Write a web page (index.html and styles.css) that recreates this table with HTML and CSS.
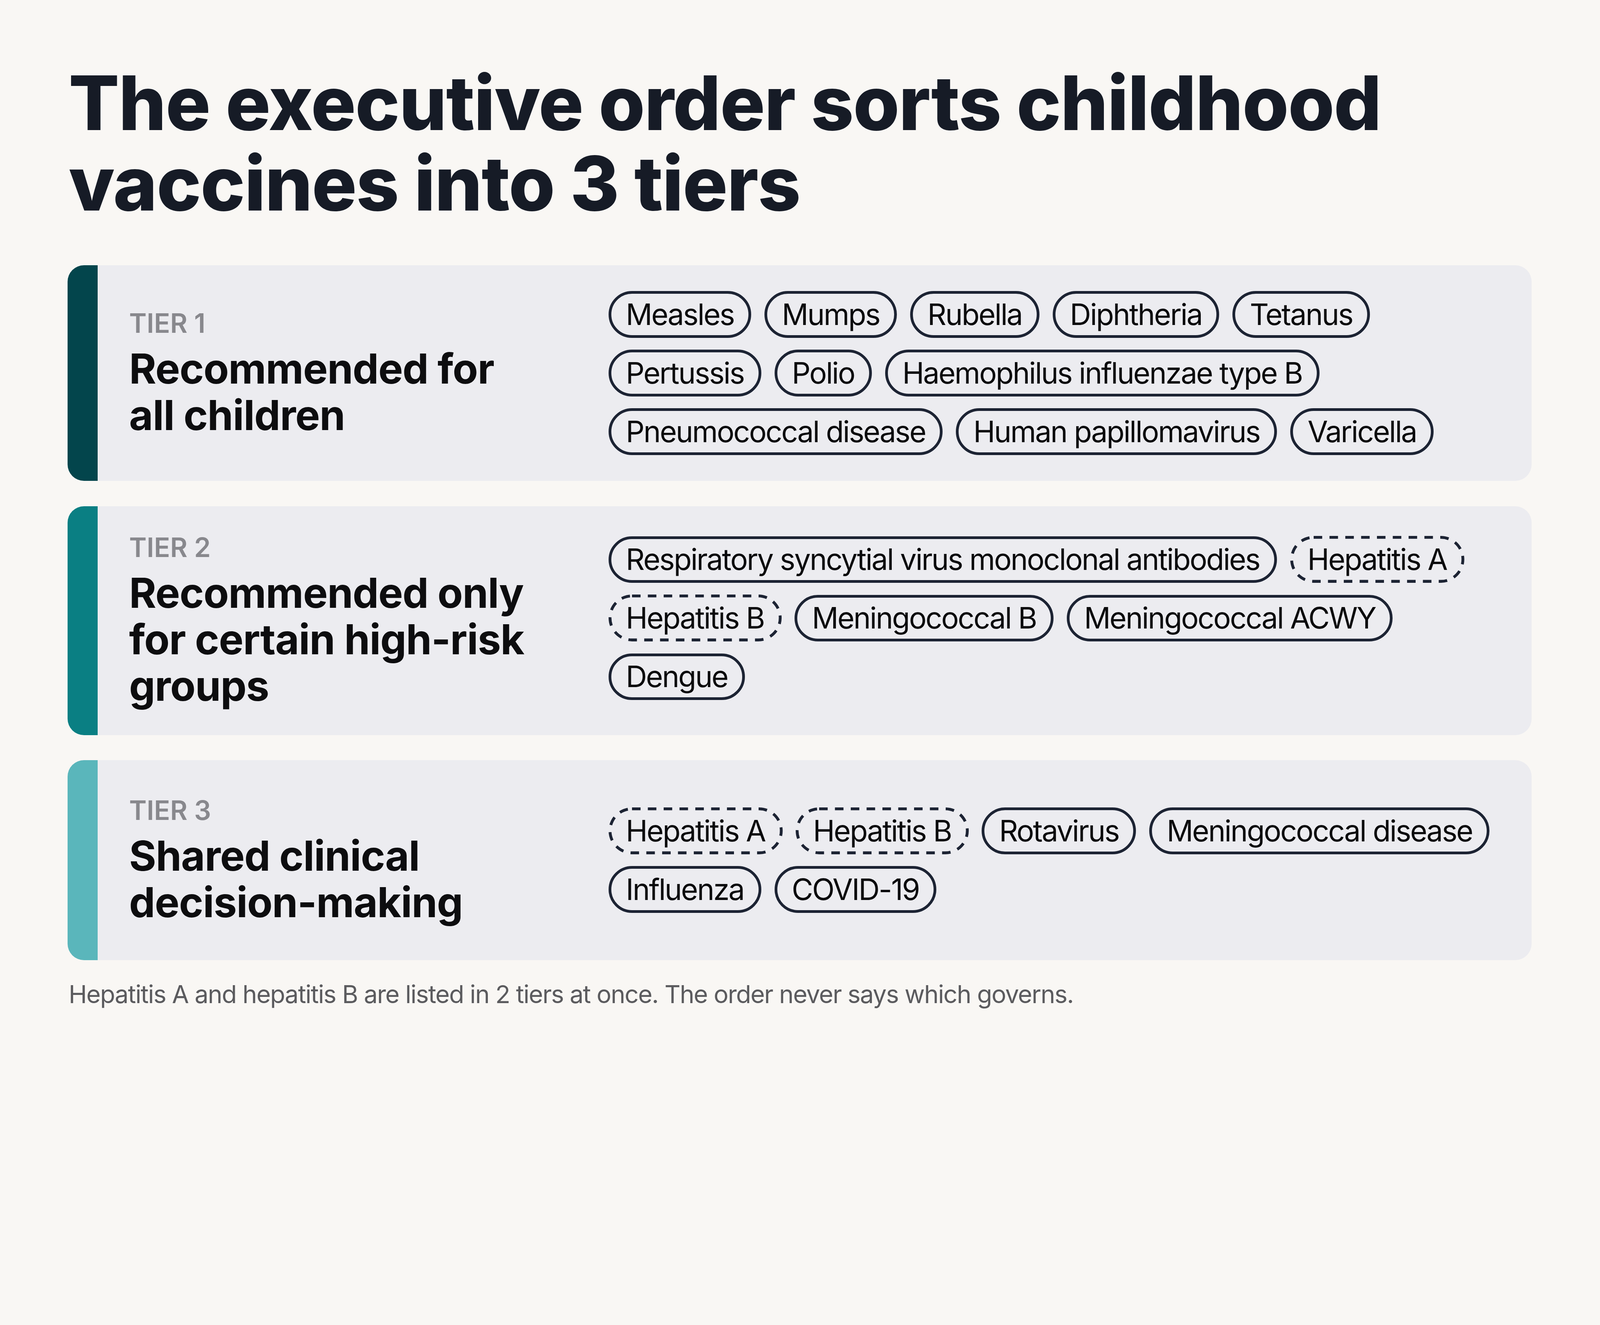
FILE: index.html
```html
<!DOCTYPE html>
<html lang="en">
<head>
<meta charset="utf-8">
<title>Childhood vaccine tiers</title>
<link rel="stylesheet" href="styles.css">
</head>
<body>
<main class="page">
  <h1 class="title">The executive order sorts childhood<br>vaccines into 3 tiers</h1>
  <section class="tiers">
    <article class="card">
      <div class="bar bar-1"></div>
      <div class="card-body">
        <div class="label">
          <div class="tier">TIER 1</div>
          <h2 class="heading">Recommended for<br>all children</h2>
        </div>
        <ul class="pills">
          <li class="pill">Measles</li>
          <li class="pill">Mumps</li>
          <li class="pill">Rubella</li>
          <li class="pill">Diphtheria</li>
          <li class="pill">Tetanus</li>
          <li class="pill">Pertussis</li>
          <li class="pill">Polio</li>
          <li class="pill">Haemophilus influenzae type B</li>
          <li class="pill">Pneumococcal disease</li>
          <li class="pill">Human papillomavirus</li>
          <li class="pill">Varicella</li>
        </ul>
      </div>
    </article>
    <article class="card">
      <div class="bar bar-2"></div>
      <div class="card-body">
        <div class="label">
          <div class="tier">TIER 2</div>
          <h2 class="heading">Recommended only<br>for certain high-risk<br>groups</h2>
        </div>
        <ul class="pills pills-shift">
          <li class="pill">Respiratory syncytial virus monoclonal antibodies</li>
          <li class="pill dashed">Hepatitis A<svg class="dash" aria-hidden="true"><rect class="dash-line"/></svg></li>
          <li class="pill dashed">Hepatitis B<svg class="dash" aria-hidden="true"><rect class="dash-line"/></svg></li>
          <li class="pill">Meningococcal B</li>
          <li class="pill">Meningococcal ACWY</li>
          <li class="pill">Dengue</li>
        </ul>
      </div>
    </article>
    <article class="card">
      <div class="bar bar-3"></div>
      <div class="card-body">
        <div class="label">
          <div class="tier">TIER 3</div>
          <h2 class="heading">Shared clinical<br>decision-making</h2>
        </div>
        <ul class="pills">
          <li class="pill dashed">Hepatitis A<svg class="dash" aria-hidden="true"><rect class="dash-line"/></svg></li>
          <li class="pill dashed">Hepatitis B<svg class="dash" aria-hidden="true"><rect class="dash-line"/></svg></li>
          <li class="pill">Rotavirus</li>
          <li class="pill">Meningococcal disease</li>
          <li class="pill">Influenza</li>
          <li class="pill">COVID-19</li>
        </ul>
      </div>
    </article>
  </section>
  <p class="note">Hepatitis A and hepatitis B are listed in 2 tiers at once. The order never says which governs.</p>
</main>
</body>
</html>
```
FILE: styles.css
```css
/* one unit = 1/5056 of the viewport width, so the layout tracks the reference frame */
:root {
  --u: calc(100vw / 5056);
}
html, body {
  margin: 0;
  padding: 0;
  background: #f9f7f4;
  overflow: hidden;
}
body {
  font-family: Inter, "Noto Sans", "Liberation Sans", sans-serif;
  color: #0d0d0f;
}
.page {
  padding: calc(197 * var(--u)) calc(216 * var(--u)) calc(120 * var(--u)) calc(213 * var(--u));
}
.title {
  margin: 0 0 calc(131 * var(--u)) calc(4 * var(--u));
  font-size: calc(237 * var(--u));
  line-height: calc(255 * var(--u));
  font-weight: 800;
  letter-spacing: calc(-2.3 * var(--u));
  color: #161b26;
}
.tiers {
  display: flex;
  flex-direction: column;
  gap: calc(80 * var(--u));
}
.card {
  display: flex;
  min-height: calc(631 * var(--u));
  background: #ececf0;
  border-radius: calc(52 * var(--u));
  overflow: hidden;
}
.bar {
  flex: none;
  width: calc(96 * var(--u));
}
.bar-1 { background: #03454c; }
.bar-2 { background: #0a7f83; }
.bar-3 { background: #5ab6bb; }
.card-body {
  flex: 1;
  display: grid;
  grid-template-columns: calc(1415 * var(--u)) 1fr;
  column-gap: calc(100 * var(--u));
  align-items: center;
  padding: calc(82 * var(--u)) calc(90 * var(--u)) calc(82 * var(--u)) calc(99 * var(--u));
}
.tier {
  font-size: calc(84 * var(--u));
  line-height: calc(98 * var(--u));
  font-weight: 600;
  color: #88888d;
  margin-bottom: calc(20 * var(--u));
}
.heading {
  margin: 0;
  font-size: calc(131 * var(--u));
  line-height: calc(147 * var(--u));
  font-weight: 700;
  letter-spacing: calc(-1.5 * var(--u));
  color: #0d0d0f;
}
.pills {
  list-style: none;
  margin: 0;
  padding: 0;
  display: flex;
  flex-wrap: wrap;
  column-gap: calc(42 * var(--u));
  row-gap: calc(38 * var(--u));
}
.pills-shift {
  margin-top: calc(-16 * var(--u));
}
.pill {
  position: relative;
  border: calc(9 * var(--u)) solid #1c2333;
  border-radius: calc(80 * var(--u));
  padding: calc(9 * var(--u)) calc(46 * var(--u));
  font-size: calc(93 * var(--u));
  line-height: calc(112 * var(--u));
  font-weight: 400;
  letter-spacing: calc(-3.5 * var(--u));
  color: #0a0a0c;
  white-space: nowrap;
}
.pill.dashed {
  border-color: transparent;
}
.dash {
  position: absolute;
  left: calc(-9 * var(--u));
  top: calc(-9 * var(--u));
  width: calc(100% + 18 * var(--u));
  height: calc(100% + 18 * var(--u));
  overflow: visible;
  pointer-events: none;
}
.dash-line {
  x: calc(4.5 * var(--u));
  y: calc(4.5 * var(--u));
  width: calc(100% - 9 * var(--u));
  height: calc(100% - 9 * var(--u));
  rx: calc(69.5 * var(--u));
  ry: calc(69.5 * var(--u));
  fill: none;
  stroke: #1c2333;
  stroke-width: calc(9 * var(--u));
  stroke-dasharray: calc(27 * var(--u)) calc(23 * var(--u));
}
.note {
  margin: calc(58 * var(--u)) 0 0 calc(4 * var(--u));
  font-size: calc(78 * var(--u));
  line-height: calc(100 * var(--u));
  color: #5b5b5e;
  letter-spacing: calc(-2.1 * var(--u));
}
```
